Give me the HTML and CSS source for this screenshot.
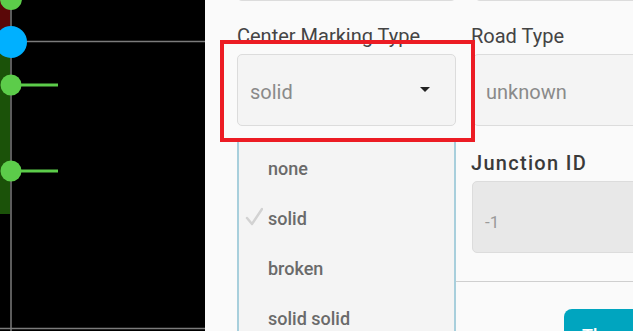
FILE: index.html
```html
<!DOCTYPE html>
<html lang="en">
<head>
    <meta charset="UTF-8">
    <meta name="viewport" content="width=device-width, initial-scale=1.0">
    <title>Road Properties</title>
    <link rel="stylesheet" href="styles.css">
</head>
<body>
    <div class="viewport">
        <!-- road canvas -->
        <div class="canvas">
            <svg width="205" height="331" viewBox="0 0 205 331">
                <rect x="0" y="0" width="205" height="331" fill="#000"/>
                <rect x="0" y="0" width="10" height="40" fill="#5a0808"/>
                <rect x="0" y="44" width="10" height="170" fill="#1b5209"/>
                <line x1="11" y1="0" x2="11" y2="331" stroke="#7b7b7b" stroke-width="1.5"/>
                <line x1="11" y1="41.5" x2="205" y2="41.5" stroke="#7b7b7b" stroke-width="1.5"/>
                <line x1="0" y1="328.5" x2="205" y2="328.5" stroke="#7b7b7b" stroke-width="1.5"/>
                <circle cx="11" cy="-1" r="11" fill="#5ccc4a"/>
                <line x1="11" y1="85" x2="58" y2="85" stroke="#5ccc4a" stroke-width="3"/>
                <circle cx="11" cy="85" r="10.5" fill="#5ccc4a"/>
                <line x1="11" y1="171" x2="58" y2="171" stroke="#5ccc4a" stroke-width="3"/>
                <circle cx="11" cy="171" r="10.5" fill="#5ccc4a"/>
                <circle cx="11" cy="42" r="16" fill="#00b0ff"/>
            </svg>
        </div>

        <!-- properties panel -->
        <div class="panel">
            <div class="fields">
                <div class="field-stub"></div>
                <div class="field-stub"></div>

                <div class="field">
                    <label class="field-label">Center Marking Type</label>
                    <div class="select">
                        <span>solid</span>
                        <span class="caret"></span>
                    </div>
                </div>
                <div class="field field-right">
                    <label class="field-label">Road Type</label>
                    <div class="input">unknown</div>
                </div>

                <div class="field"></div>
                <div class="field field-right">
                    <label class="field-label strong">Junction ID</label>
                    <div class="input disabled">-1</div>
                </div>
            </div>

            <div class="footer">
                <button class="btn">Th</button>
            </div>

            <ul class="dropdown">
                <li>none</li>
                <li class="checked">
                    <svg class="check" width="18" height="20" viewBox="0 0 18 20">
                        <path d="M2 12 L7 18 L17 3" fill="none" stroke="#d2d2d2" stroke-width="2.4" stroke-linecap="round" stroke-linejoin="round"/>
                    </svg>
                    solid
                </li>
                <li>broken</li>
                <li>solid solid</li>
            </ul>

            <div class="highlight"></div>
        </div>
    </div>
</body>
</html>
```

FILE: styles.css
```css
* {
    box-sizing: border-box;
    margin: 0;
    padding: 0;
}

body {
    font-family: 'Roboto', 'Liberation Sans', sans-serif;
    width: 633px;
    height: 331px;
    overflow: hidden;
    background: #000;
}

.viewport {
    display: flex;
    height: 331px;
}

.canvas {
    width: 205px;
    flex-shrink: 0;
}

.canvas svg {
    display: block;
}

/* Panel */
.panel {
    position: relative;
    width: 520px;
    flex-shrink: 0;
    background-color: #fafafa;
    padding-left: 32px;
}

.fields {
    display: grid;
    grid-template-columns: 219px 260px;
    column-gap: 17px;
}

.field-stub {
    height: 6px;
    margin-top: -5px;
    border: 1px solid #dcdcdc;
    border-top: none;
    border-radius: 0 0 5px 5px;
    background-color: #f4f4f4;
}

.field-stub + .field-stub {
    margin-left: 2px;
}

.field {
    padding-top: 23px;
}

.fields .field:nth-child(n+5) {
    padding-top: 25px;
}

.field-label {
    display: block;
    font-size: 20px;
    line-height: 24px;
    color: #444;
    margin-bottom: 6px;
}

.field-right .field-label {
    margin-left: -2px;
}

.field-label.strong {
    font-weight: 500;
    letter-spacing: 1.3px;
    color: #3a3a3a;
}

.select,
.input {
    display: flex;
    align-items: center;
    height: 72px;
    padding: 4px 12px 0;
    font-size: 20px;
    color: #8a8a8a;
    background-color: #f4f4f4;
    border: 1px solid #dcdcdc;
    border-radius: 5px;
}

.select {
    justify-content: space-between;
    padding-right: 25px;
}

.caret {
    width: 0;
    height: 0;
    border-left: 5px solid transparent;
    border-right: 5px solid transparent;
    border-top: 5px solid #222;
    margin-top: -6px;
}

.input.disabled {
    background-color: #e8e8e8;
    color: #9a9a9a;
    font-size: 17px;
    padding-top: 10px;
    margin-left: -1px;
}

.footer {
    margin-top: 28px;
    border-top: 1.5px solid #cfcfcf;
    padding-top: 27px;
    padding-left: 327px;
}

.btn {
    display: block;
    width: 110px;
    height: 44px;
    border: none;
    border-radius: 8px;
    background-color: #00a5bf;
    color: #fff;
    font-family: inherit;
    font-size: 18px;
    line-height: 21px;
    font-weight: 500;
    text-align: left;
    padding: 14px 0 6px 18px;
}

/* Open dropdown list */
.dropdown {
    position: absolute;
    left: 32px;
    top: 140px;
    width: 219px;
    height: 200px;
    list-style: none;
    padding-top: 4px;
    background-color: #f4f4f4;
    border-left: 2px solid #a8cfdc;
    border-right: 2px solid #a8cfdc;
}

.dropdown li {
    position: relative;
    height: 50px;
    line-height: 50px;
    padding-left: 29px;
    font-size: 18px;
    font-weight: 500;
    color: #6a6a6a;
}

.check {
    position: absolute;
    left: 6px;
    top: 12px;
}

/* Annotation box */
.highlight {
    position: absolute;
    left: 15px;
    top: 40px;
    width: 255px;
    height: 102px;
    border: 4px solid #ec1c24;
}
```
